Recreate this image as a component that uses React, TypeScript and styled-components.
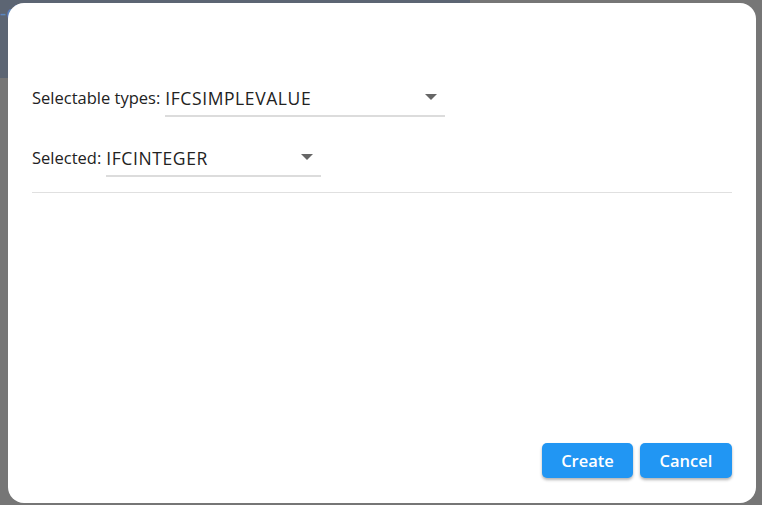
import React from "react";
import styled, { createGlobalStyle } from "styled-components";

const Global = createGlobalStyle`
  html, body { margin: 0; padding: 0; }
  body {
    width: 762px;
    height: 505px;
    overflow: hidden;
    background: #767676;
    font-family: "Open Sans", "Noto Sans", Arial, sans-serif;
  }
`;

const Page = styled.div`
  width: 762px;
  height: 505px;
  display: flex;
  flex-direction: column;
  background: #767676;
`;

const HeaderBand = styled.div`
  width: 470px;
  height: 78px;
  background: #5c6573;
  color: #5b86c0;
  font-size: 20px;
  line-height: 26px;
`;

const Backdrop = styled.div`
  position: fixed;
  inset: 0;
  background: transparent;
`;

const Dialog = styled.div`
  position: absolute;
  left: 8px;
  top: 3px;
  width: 748px;
  height: 500px;
  box-sizing: border-box;
  background: #ffffff;
  border-radius: 16px;
  padding: 76px 24px 25px 24px;
  display: flex;
  flex-direction: column;
`;

const Row = styled.div<{ $gap?: number }>`
  display: flex;
  align-items: center;
  margin-bottom: ${(p) => p.$gap ?? 0}px;
`;

const Label = styled.span`
  font-size: 16.5px;
  color: #222;
  margin-right: 5px;
  line-height: 32px;
`;

const SelectBox = styled.div<{ $width: number }>`
  width: ${(p) => p.$width}px;
  height: 38px;
  padding-top: 2px;
  box-sizing: border-box;
  border-bottom: 2px solid #dcdcdc;
  display: flex;
  align-items: center;
  justify-content: space-between;
  padding-right: 8px;
  font-size: 17.5px;
  letter-spacing: 0.6px;
  color: #222;
`;

const Arrow = styled.span`
  width: 0;
  height: 0;
  border-left: 6px solid transparent;
  border-right: 6px solid transparent;
  border-top: 6px solid #666;
  margin-top: -2px;
`;

const Divider = styled.div`
  height: 1px;
  background: #e0e0e0;
  margin-top: 15px;
`;

const Spacer = styled.div`
  flex: 1;
`;

const Actions = styled.div`
  display: flex;
  justify-content: flex-end;
  gap: 7px;
`;

const Button = styled.button<{ $width: number }>`
  width: ${(p) => p.$width}px;
  height: 35px;
  border: none;
  border-radius: 5px;
  background: #2196f3;
  color: #ffffff;
  font-family: "Open Sans", "Noto Sans", Arial, sans-serif;
  font-size: 16.5px;
  font-weight: 600;
  box-shadow: 0 2px 3px rgba(0, 0, 0, 0.3);
  cursor: pointer;
  padding: 0;
`;

export default function App() {
  return (
    <>
      <Global />
      <Page>
        <HeaderBand>-d</HeaderBand>
      </Page>
      <Backdrop>
        <Dialog>
          <Row $gap={22}>
            <Label>Selectable types:</Label>
            <SelectBox $width={280}>
              <span>IFCSIMPLEVALUE</span>
              <Arrow />
            </SelectBox>
          </Row>
          <Row>
            <Label>Selected:</Label>
            <SelectBox $width={215}>
              <span>IFCINTEGER</span>
              <Arrow />
            </SelectBox>
          </Row>
          <Divider />
          <Spacer />
          <Actions>
            <Button $width={91}>Create</Button>
            <Button $width={92}>Cancel</Button>
          </Actions>
        </Dialog>
      </Backdrop>
    </>
  );
}
